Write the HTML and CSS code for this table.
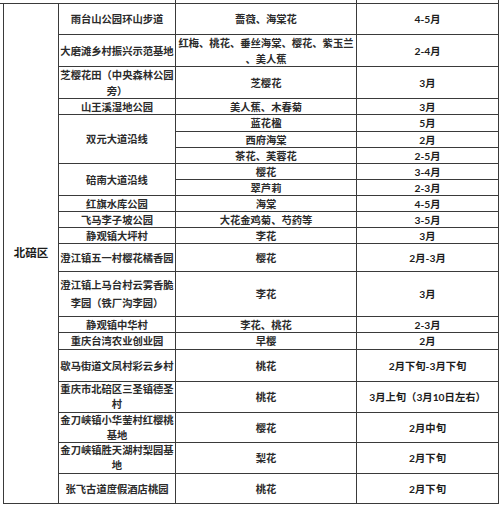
FILE: index.html
```html
<!DOCTYPE html>
<html lang="zh-CN">
<head>
<meta charset="utf-8">
<title>北碚区赏花地点</title>
<link rel="stylesheet" href="styles.css">
</head>
<body>
<div class="sheet">
  <div class="c stub stub-first"></div><div class="c stub"></div><div class="c stub"></div><div class="c stub"></div>

  <div class="c district"><span>北碚区</span></div>

  <div class="c"><span>雨台山公园环山步道</span></div><div class="c"><span>蔷薇、海棠花</span></div><div class="c m"><span>4-5月</span></div>

  <div class="c"><span>大磨滩乡村振兴示范基地</span></div><div class="c"><span>红梅、桃花、垂丝海棠、樱花、紫玉兰<br>、美人蕉</span></div><div class="c m"><span>2-4月</span></div>

  <div class="c"><span>芝樱花田（中央森林公园<br>旁）</span></div><div class="c"><span>芝樱花</span></div><div class="c m"><span>3月</span></div>

  <div class="c"><span>山王溪湿地公园</span></div><div class="c"><span>美人蕉、木春菊</span></div><div class="c m"><span>3月</span></div>

  <div class="c span3"><span>双元大道沿线</span></div><div class="c"><span>蓝花楹</span></div><div class="c m"><span>5月</span></div>
  <div class="c"><span>西府海棠</span></div><div class="c m"><span>2月</span></div>
  <div class="c"><span>茶花、芙蓉花</span></div><div class="c m"><span>2-5月</span></div>

  <div class="c span2"><span>碚南大道沿线</span></div><div class="c"><span>樱花</span></div><div class="c m"><span>3-4月</span></div>
  <div class="c"><span>翠芦莉</span></div><div class="c m"><span>2-3月</span></div>

  <div class="c"><span>红旗水库公园</span></div><div class="c"><span>海棠</span></div><div class="c m"><span>4-5月</span></div>

  <div class="c"><span>飞马李子坡公园</span></div><div class="c"><span>大花金鸡菊、芍药等</span></div><div class="c m"><span>3-5月</span></div>

  <div class="c"><span>静观镇大坪村</span></div><div class="c"><span>李花</span></div><div class="c m"><span>3月</span></div>

  <div class="c"><span>澄江镇五一村樱花橘香园</span></div><div class="c"><span>樱花</span></div><div class="c m"><span>2月-3月</span></div>

  <div class="c tall"><span>澄江镇上马台村云雾香脆<br>李园（铁厂沟李园）</span></div><div class="c"><span>李花</span></div><div class="c m"><span>3月</span></div>

  <div class="c"><span>静观镇中华村</span></div><div class="c"><span>李花、桃花</span></div><div class="c m"><span>2-3月</span></div>

  <div class="c"><span>重庆台湾农业创业园</span></div><div class="c"><span>早樱</span></div><div class="c m"><span>2月</span></div>

  <div class="c"><span>歇马街道文凤村彩云乡村</span></div><div class="c"><span>桃花</span></div><div class="c m"><span>2月下旬-3月下旬</span></div>

  <div class="c tight"><span>重庆市北碚区三圣镇德圣<br>村</span></div><div class="c"><span>桃花</span></div><div class="c m"><span>3月上旬（3月10日左右）</span></div>

  <div class="c tight"><span>金刀峡镇小华蓥村红樱桃<br>基地</span></div><div class="c"><span>樱花</span></div><div class="c m"><span>2月中旬</span></div>

  <div class="c tight"><span>金刀峡镇胜天湖村梨园基<br>地</span></div><div class="c"><span>梨花</span></div><div class="c m"><span>2月下旬</span></div>

  <div class="c"><span>张飞古道度假酒店桃园</span></div><div class="c"><span>桃花</span></div><div class="c m"><span>2月下旬</span></div>
</div>
</body>
</html>
```

FILE: styles.css
```css
html, body {
  margin: 0;
  padding: 0;
  background: #ffffff;
}

body {
  font-family: Lato, "Noto Sans CJK SC", sans-serif;
  color: #2b2b2b;
  font-size: 10.3px;
  overflow: hidden;
}

.sheet {
  display: grid;
  margin-left: 3px;
  width: 496px;
  grid-template-columns: 56px 117px 181px 142px;
  grid-template-rows: 4px 31px 32px 32px 16px 17px 16px 16px 16px 16px 16px 16px 16px 28px 45px 16px 17px 32px 31px 30px 31px 30px;
}

.c {
  box-sizing: border-box;
  border-right: 1px solid #3a3a3a;
  border-bottom: 1px solid #3a3a3a;
  display: flex;
  align-items: center;
  justify-content: center;
  text-align: center;
  white-space: nowrap;
  line-height: 16px;
  font-weight: 700;
  overflow: hidden;
}

.stub-first {
  border-right: 0;
  margin-left: -3px;
}

.stub-first + .stub {
  border-left: 1px solid #3a3a3a;
}

.sheet > .stub:nth-child(2) {
  border-left: 0;
}

.district {
  grid-column: 1;
  grid-row: 2 / span 21;
  border-left: 1px solid #3a3a3a;
  font-size: 11.5px;
  font-weight: 700;
  color: #1c1c1c;
  padding-bottom: 2px;
}

.span3 {
  grid-row: span 3;
}

.span2 {
  grid-row: span 2;
}

.m {
  font-weight: 700;
  color: #1c1c1c;
}

.tall {
  line-height: 18px;
}

.tight {
  line-height: 15px;
}
```
